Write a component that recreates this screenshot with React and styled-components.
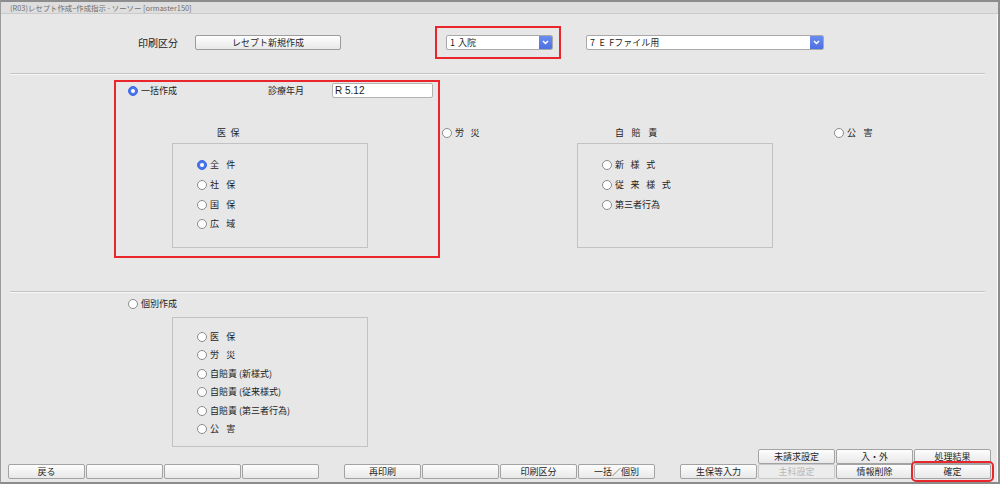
import React from "react";
import styled, { createGlobalStyle } from "styled-components";

const GlobalStyle = createGlobalStyle`
  html, body { margin: 0; padding: 0; background: #e7e7e7; }
  body { font-family: "Noto Sans CJK JP", "Noto Sans", sans-serif; }
  * { box-sizing: border-box; }
`;

const Window = styled.div`
  width: 1000px;
  height: 484px;
  border-top: 2px solid #8c8c8c;
  border-left: 1px solid #9b9b9b;
  border-right: 2px solid #8c8c8c;
  border-bottom: 2px solid #8c8c8c;
  background: #e7e7e7;
  box-shadow: inset -1px 0 0 #fbfbfb;
  display: flex;
  flex-direction: column;
  color: #1c1c1c;
  font-size: 9px;
`;

const TitleBar = styled.div`
  height: 12px;
  background: #dedede;
  border-bottom: 1px solid #cbcbcb;
  font-size: 7.4px;
  line-height: 11px;
  color: #6e6e6e;
  padding-left: 9px;
  white-space: nowrap;
`;

const Header = styled.div`
  height: 59px;
  flex: none;
  display: flex;
  align-items: center;
  padding: 0 0 2px 137px;
`;

const FieldLabel = styled.span`
  width: ${(p) => p.$w || 57}px;
  font-size: ${(p) => p.$size || 10}px;
  flex: none;
`;

const PlainButton = styled.div`
  width: ${(p) => p.$w}px;
  height: 15px;
  border: 1px solid #9c9c9c;
  border-radius: 2px;
  background: linear-gradient(#fdfdfd, #e9e9e9);
  text-align: center;
  line-height: 13px;
  font-size: 9px;
  color: #1e1e1e;
`;

const Highlight = styled.div`
  width: ${(p) => p.$w}px;
  height: ${(p) => p.$h}px;
  margin-left: ${(p) => p.$ml || 0}px;
  border: 2px solid #e8262b;
  display: flex;
  align-items: center;
  padding-left: 9px;
`;

const Select = styled.div`
  width: ${(p) => p.$w}px;
  height: 15px;
  margin-left: ${(p) => p.$ml || 0}px;
  display: flex;
  background: #fff;
  border: 1px solid #a9a9a9;
  border-radius: 2px;
  overflow: hidden;
`;

const SelectText = styled.span`
  flex: 1;
  padding-left: 3px;
  line-height: 13px;
  font-size: 9px;
  white-space: pre;
  word-spacing: ${(p) => p.$ws || 0}px;
`;

const SelectArrow = styled.span`
  width: 13px;
  flex: none;
  background: linear-gradient(#6a8cf0, #4d70e2);
  display: flex;
  align-items: center;
  justify-content: center;
`;

const Separator = styled.div`
  flex: none;
  height: 2px;
  border-top: 1px solid #c4c4c4;
  border-bottom: 1px solid #f7f7f7;
  margin: 0 13px 0 9px;
`;

const Section1 = styled.div`
  height: 216px;
  flex: none;
  display: grid;
  grid-template-columns: 328px 135px 257px 1fr;
  align-items: start;
  padding: 5px 0 0 113px;
`;

const Section2 = styled.div`
  flex: 1;
  display: flex;
  flex-direction: column;
  align-items: flex-start;
  padding: 4px 0 0 127px;
`;

const RedFrame = styled.div`
  width: 326px;
  height: 178px;
  border: 2px solid #e8262b;
  padding: 1px 0 0 12px;
`;

const TopRow = styled.div`
  display: grid;
  grid-template-columns: 140px 64px 101px;
  align-items: center;
  height: 15px;
`;

const DateInput = styled.div`
  width: 101px;
  height: 15px;
  background: #fff;
  border: 1px solid #b3b3b3;
  border-radius: 2px;
  font-family: "Liberation Sans", Arial, sans-serif;
  font-size: 10px;
  line-height: 13px;
  padding-left: 2px;
`;

const OptionRow = styled.div`
  display: flex;
  align-items: center;
  gap: 3px;
  height: ${(p) => p.$h || 14}px;
  margin-top: ${(p) => p.$mt || 0}px;
  flex: none;
`;

const Radio = styled.span`
  position: relative;
  width: 10px;
  height: 10px;
  flex: none;
  border-radius: 50%;
  background: ${(p) => (p.$on ? "#4a74ee" : "#fff")};
  border: 1px solid ${(p) => (p.$on ? "#3f69e3" : "#8b8b8b")};
  &::after {
    content: "";
    display: ${(p) => (p.$on ? "block" : "none")};
    position: absolute;
    left: 2px;
    top: 2px;
    width: 4px;
    height: 4px;
    border-radius: 50%;
    background: #fff;
  }
`;

const OptionText = styled.span`
  white-space: pre;
  word-spacing: ${(p) => p.$ws || 0}px;
  font-size: 9px;
  line-height: 14px;
`;

const Group = styled.div`
  margin: ${(p) => p.$mt || 0}px 0 0 ${(p) => p.$ml || 0}px;
`;

const GroupTitle = styled.div`
  height: 14px;
  line-height: 14px;
  margin-bottom: 3px;
  padding-left: ${(p) => p.$indent}px;
  white-space: pre;
  word-spacing: ${(p) => p.$ws || 0}px;
`;

const GroupBox = styled.div`
  width: 196px;
  height: ${(p) => p.$h}px;
  margin-top: ${(p) => p.$mt || 0}px;
  margin-left: ${(p) => p.$ml || 0}px;
  border: 1px solid #c2c2c2;
  padding: ${(p) => p.$pt}px 0 0 24px;
  display: flex;
  flex-direction: column;
`;

const Footer = styled.div`
  height: 33px;
  flex: none;
  display: grid;
  grid-template-columns:
    repeat(4, 77px) 23px repeat(4, 77px) 23px repeat(4, 77px);
  grid-template-rows: 15px 15px;
  column-gap: 1px;
  padding: 0 0 3px 7px;
`;

const FnButton = styled.div`
  grid-column: ${(p) => p.$col};
  grid-row: ${(p) => p.$row};
  height: 15px;
  border: 1px solid ${(p) => (p.$disabled ? "#c9c9c9" : "#a3a3a3")};
  border-radius: 2px;
  background: ${(p) =>
    p.$disabled ? "#ececec" : "linear-gradient(#fdfdfd, #e8e8e8)"};
  color: ${(p) => (p.$disabled ? "#b8b8b8" : "#1e1e1e")};
  text-align: center;
  line-height: 13px;
  font-size: 9px;
  white-space: nowrap;
  outline: ${(p) => (p.$marked ? "2px solid #e8262b" : "none")};
  outline-offset: 1px;
`;

const Chevron = () => (
  <svg width="7" height="5" viewBox="0 0 7 5">
    <polyline points="1,1 3.5,3.6 6,1" fill="none" stroke="#fff" strokeWidth="1.4" />
  </svg>
);

const Option = ({ on, text, ws, h, mt }) => (
  <OptionRow $h={h} $mt={mt}>
    <Radio $on={on} />
    <OptionText $ws={ws}>{text}</OptionText>
  </OptionRow>
);

const DropDown = ({ w, ml, text, ws }) => (
  <Select $w={w} $ml={ml}>
    <SelectText $ws={ws}>{text}</SelectText>
    <SelectArrow>
      <Chevron />
    </SelectArrow>
  </Select>
);

const lower = [
  { col: 1, t: "戻る" },
  { col: 2, t: "" },
  { col: 3, t: "" },
  { col: 4, t: "" },
  { col: 6, t: "再印刷" },
  { col: 7, t: "" },
  { col: 8, t: "印刷区分" },
  { col: 9, t: "一括／個別" },
  { col: 11, t: "生保等入力" },
  { col: 12, t: "主科設定", disabled: true },
  { col: 13, t: "情報削除" },
  { col: 14, t: "確定", marked: true },
];

const upper = [
  { col: 12, t: "未請求設定" },
  { col: 13, t: "入・外" },
  { col: 14, t: "処理結果" },
];

export default function App() {
  return (
    <>
      <GlobalStyle />
      <Window>
        <TitleBar>(R03)レセプト作成−作成指示 - ソーソー [ormaster150]</TitleBar>
        <Header>
          <FieldLabel>印刷区分</FieldLabel>
          <PlainButton $w={146}>レセプト新規作成</PlainButton>
          <Highlight $w={126} $h={33} $ml={94}>
            <DropDown w={107} text="1 入院" ws={1} />
          </Highlight>
          <DropDown w={238} ml={25} text="7 E Fファイル用" ws={2.5} />
        </Header>
        <Separator />
        <Section1>
          <RedFrame>
            <TopRow>
              <Option on text="一括作成" h={15} />
              <FieldLabel $w={64} $size={9}>診療年月</FieldLabel>
              <DateInput>R 5.12</DateInput>
            </TopRow>
            <Group $mt={28} $ml={44}>
              <GroupTitle $indent={45} $ws={2.5}>医 保</GroupTitle>
              <GroupBox $h={105} $pt={11.5}>
                <Option on text="全 件" ws={5.3} h={19.7} />
                <Option text="社 保" ws={5.3} h={19.7} />
                <Option text="国 保" ws={5.3} h={19.7} />
                <Option text="広 域" ws={5.3} h={19.7} />
              </GroupBox>
            </Group>
          </RedFrame>
          <Option text="労 災" ws={4.6} mt={46} />
          <Group $mt={46}>
            <GroupTitle $indent={38} $ws={5.6}>自 賠 責</GroupTitle>
            <GroupBox $h={105} $pt={11.5}>
              <Option text="新 様 式" ws={4.6} h={19.7} />
              <Option text="従 来 様 式" ws={4.6} h={19.7} />
              <Option text="第三者行為" h={19.7} />
            </GroupBox>
          </Group>
          <Option text="公 害" ws={5.6} mt={46} />
        </Section1>
        <Separator />
        <Section2>
          <Option text="個別作成" />
          <GroupBox $h={130} $pt={9.5} $mt={6} $ml={44}>
            <Option text="医 保" ws={5.3} h={18.5} />
            <Option text="労 災" ws={5.3} h={18.5} />
            <Option text="自賠責 (新様式)" h={18.5} />
            <Option text="自賠責 (従来様式)" h={18.5} />
            <Option text="自賠責 (第三者行為)" h={18.5} />
            <Option text="公 害" ws={5.3} h={18.5} />
          </GroupBox>
        </Section2>
        <Footer>
          {upper.map((b) => (
            <FnButton key={"u" + b.col} $col={b.col} $row={1}>
              {b.t}
            </FnButton>
          ))}
          {lower.map((b) => (
            <FnButton
              key={"l" + b.col}
              $col={b.col}
              $row={2}
              $disabled={b.disabled}
              $marked={b.marked}
            >
              {b.t}
            </FnButton>
          ))}
        </Footer>
      </Window>
    </>
  );
}
